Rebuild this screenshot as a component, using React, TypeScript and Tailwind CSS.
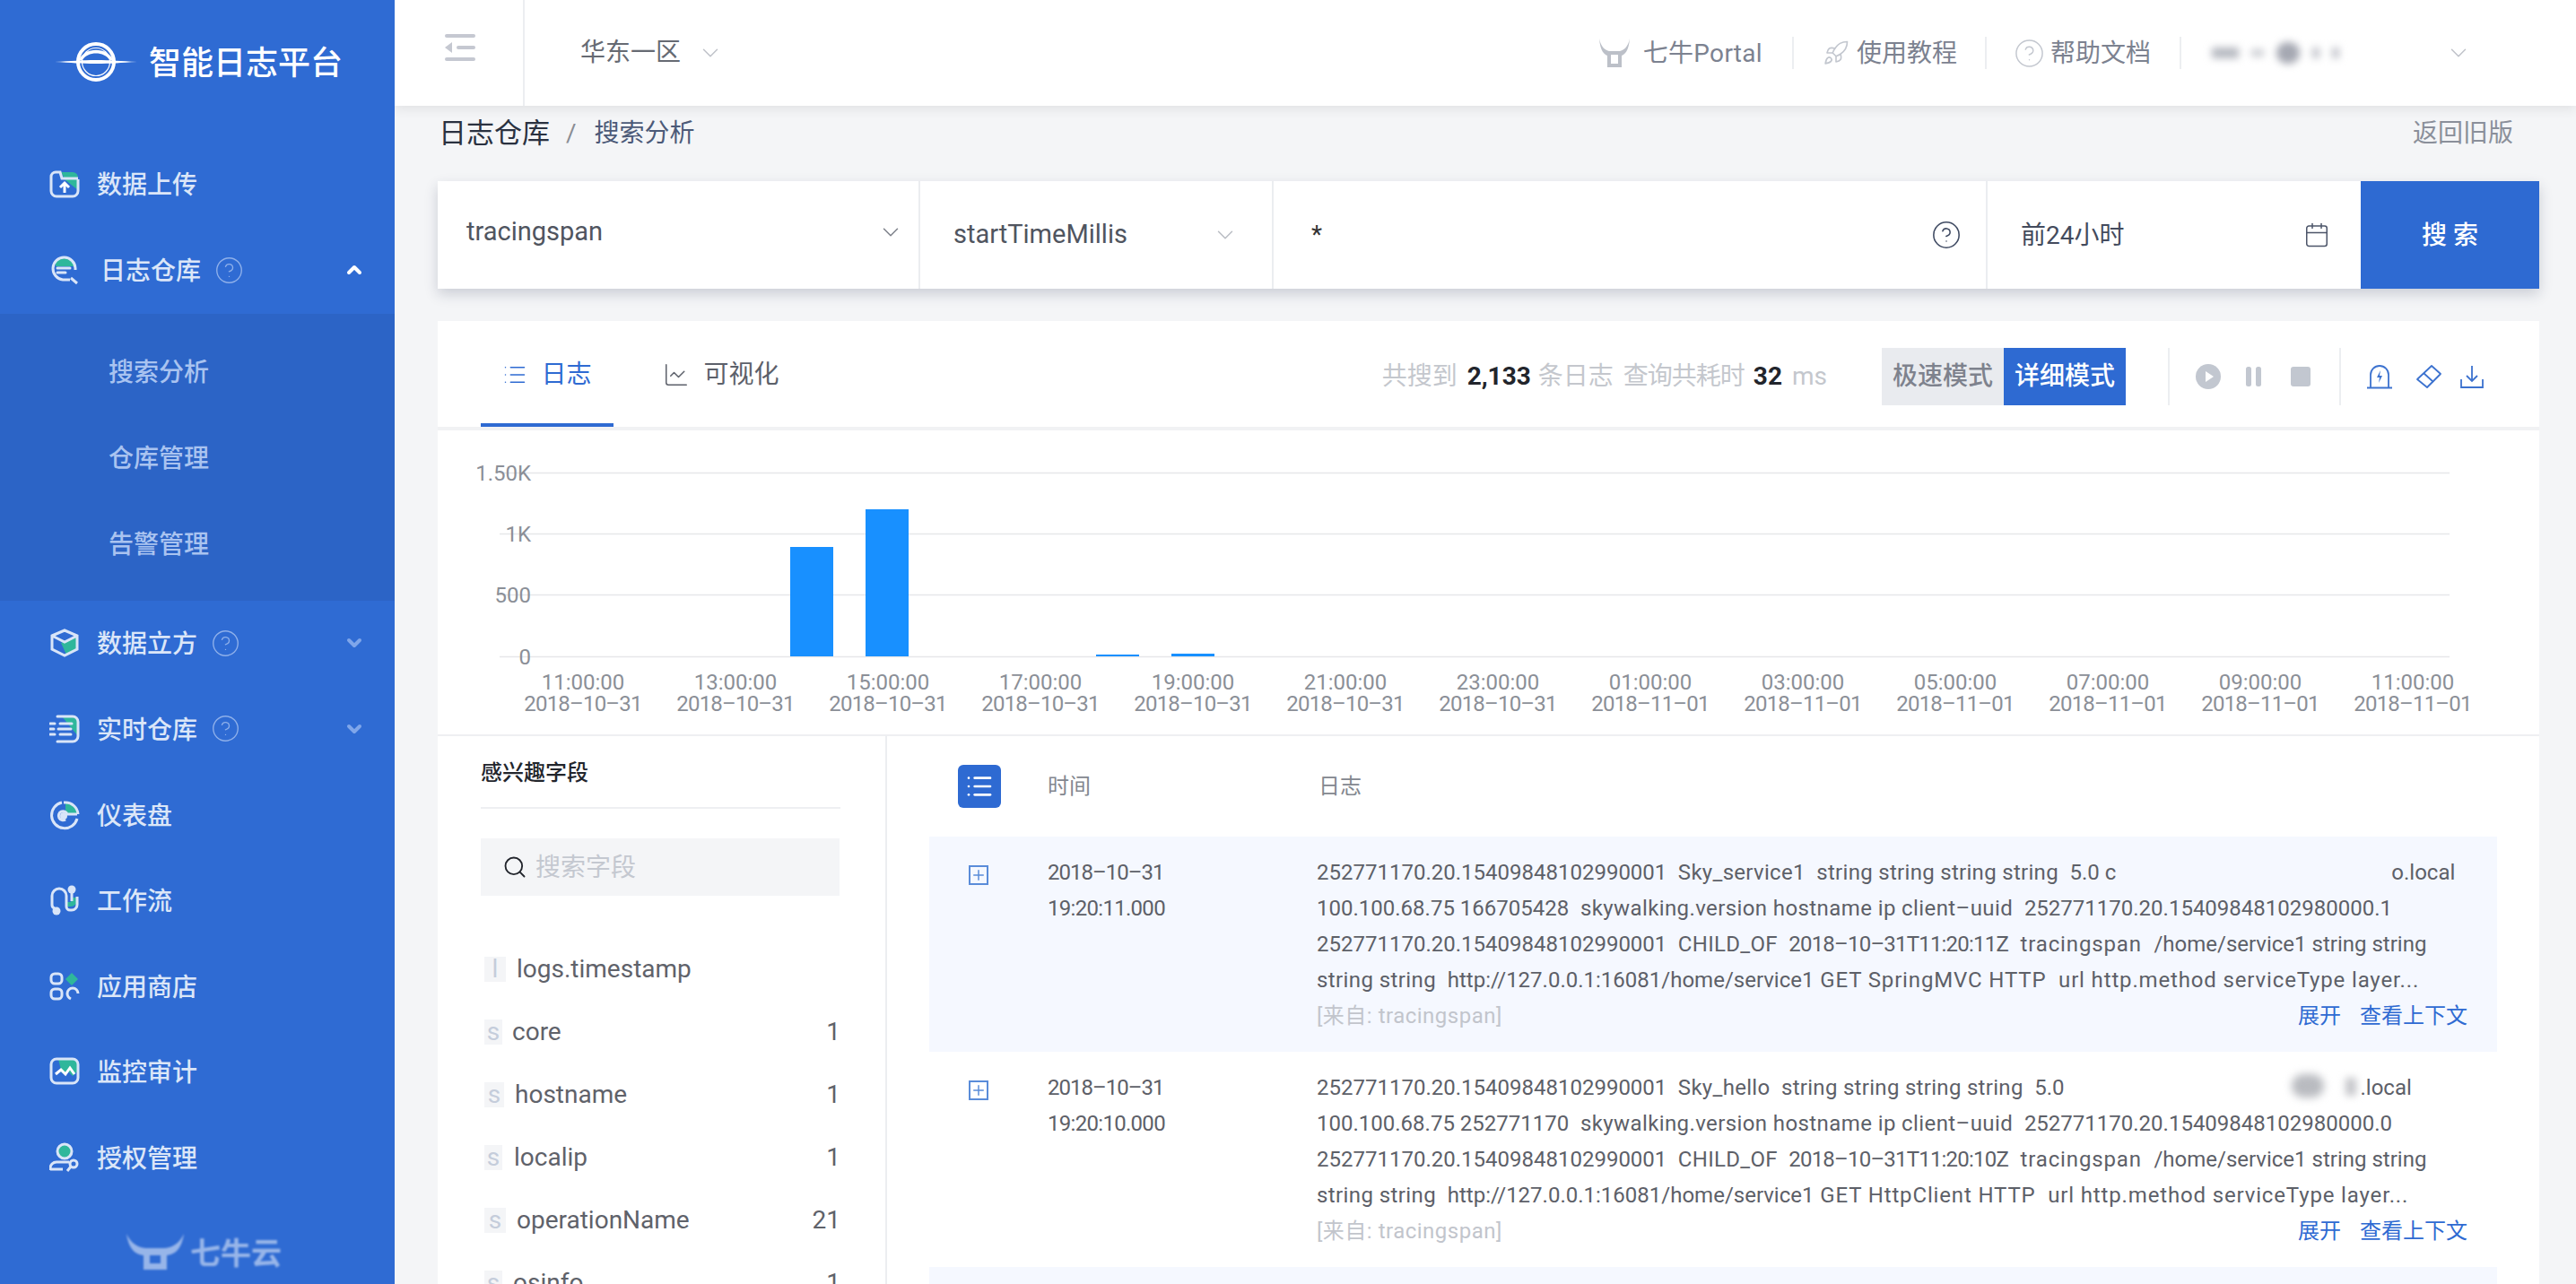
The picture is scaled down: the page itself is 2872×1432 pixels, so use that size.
import React from 'react';
import { ChevronDown, ChevronUp, CircleHelp, Rocket, Search, LineChart, List, Plus, Calendar } from 'lucide-react';

const S = '#d9e5f8';
const T = '#2fb79b';

const svg = 'w-[34px] h-[34px] shrink-0';
const IconUpload = () => (
  <svg viewBox="0 0 34 34" className={svg} fill="none" stroke={S} strokeWidth="3">
    <path d="M13 4h13a6 6 0 0 1 6 6v14L18 13z" fill={T} stroke="none" />
    <path d="M2 12V9a5 5 0 0 1 5-5h5l2 7h18M2 12v13a6 6 0 0 0 6 6h18a6 6 0 0 0 6-6V12" />
    <path d="M17 27v-10M12 21l5-5 5 5" stroke="#fff" />
  </svg>
);
const IconLog = () => (
  <svg viewBox="0 0 34 34" className={svg} fill="none" stroke={S} strokeWidth="3">
    <path d="M7 8a13 13 0 0 1 23 5H7z" fill={T} stroke="none" />
    <path d="M23 28H15A12.500 12.500 0 1 1 29 15v2M24 26l7 6" />
    <path d="M9 15h14M9 20h9" strokeLinecap="round" />
  </svg>
);
const IconCube = () => (
  <svg viewBox="0 0 34 34" className={svg} fill="none" stroke={S} strokeWidth="3">
    <path d="M13 17l19-7v14l-13 6z" fill={T} stroke="none" />
    <path d="M3 9l14-6 14 6v15l-14 7-14-7zM3 9l14 7 14-7M3 14v10" />
  </svg>
);
const IconStream = () => (
  <svg viewBox="0 0 34 34" className={svg} fill="none" stroke={S} strokeWidth="3" strokeLinecap="round">
    <path d="M14 3h12a6 6 0 0 1 6 6v16z" fill={T} stroke="none" />
    <path d="M9 3h17a6 6 0 0 1 6 6v16a6 6 0 0 1-6 6H9" />
    <path d="M12 11h13M1 11h5M10 17h14M1 17h4M12 23h12M1 23h5" />
  </svg>
);
const IconPie = () => (
  <svg viewBox="0 0 34 34" className={svg} fill="none" stroke={S} strokeWidth="3">
    <path d="M18 3a14 14 0 0 1 14 13H18z" fill={T} stroke="none" />
    <path d="M14 3A14.500 14.500 0 1 0 31 21M31 16H20a5 5 0 1 0-2 6" />
    <circle cx="16" cy="18" r="2.500" fill={S} />
    <path d="M16 3h2a14 14 0 0 1 14 13" />
  </svg>
);
const IconFlow = () => (
  <svg viewBox="0 0 34 34" className={svg} fill="none" stroke={S} strokeWidth="3">
    <path d="M18 24h6a7 7 0 0 0 7-7v-3h-7v5h-6z" fill={T} stroke="none" />
    <path d="M6 26a4 4 0 0 1-3-4V12a8 8 0 0 1 16 0v12a4 4 0 0 0 4 4h2a6 6 0 0 0 6-6V13" />
    <circle cx="8" cy="29" r="4.500" fill={S} stroke="none" />
    <circle cx="25" cy="5" r="4.500" fill={S} stroke="none" />
    <path d="M25 6v12" />
  </svg>
);
const IconApps = () => (
  <svg viewBox="0 0 34 34" className={svg} fill="none" stroke={S} strokeWidth="3">
    <rect x="2" y="3" width="12" height="11" rx="4" />
    <rect x="2" y="20" width="12" height="11" rx="4" />
    <path d="M25 2l7 7-7 7-7-7z" fill={T} stroke="none" />
    <path d="M32 25a6 6 0 0 0-12 0c0 3 2 5 4 6" />
  </svg>
);
const IconMonitor = () => (
  <svg viewBox="0 0 34 34" className={svg} fill="none" stroke={S} strokeWidth="3">
    <path d="M10 3h18a4 4 0 0 1 4 4v9l-6 6-6-6-6 3z" fill={T} stroke="none" />
    <rect x="2" y="3" width="30" height="27" rx="6" />
    <path d="M7 20l6-5 5 5 5-7 5 7" stroke="#fff" />
  </svg>
);
const IconAuth = () => (
  <svg viewBox="0 0 34 34" className={svg} fill="none" stroke={S} strokeWidth="3">
    <circle cx="17" cy="10" r="8" fill={T} stroke={S} />
    <path d="M1 31v-2a7 7 0 0 1 7-7h14M1 30h14" />
    <circle cx="27" cy="24" r="4" />
    <path d="M24 27l-4 5" />
  </svg>
);

const HelpDim = () => <CircleHelp className="w-[33px] h-[33px] text-[#8fb0ea] ml-[15px] shrink-0" strokeWidth={1} />;

function NavItem({ icon, label, help, arrow, gap = 'ml-[19px]', h = 'h-[95.6px]' }: { icon: React.ReactNode; label: string; help?: boolean; arrow?: 'up' | 'down'; gap?: string; h?: string }) {
  return (
    <div className={`flex items-center pl-[55px] pr-[33px] ${h}`}>
      {icon}
      <span className={`${gap} pt-[4px] text-[28px] text-[#dbe6f8] font-medium`}>{label}</span>
      {help && <HelpDim />}
      {arrow === 'up' && <ChevronUp className="ml-auto w-[24px] h-[24px] text-white" strokeWidth={4} />}
      {arrow === 'down' && <ChevronDown className="ml-auto w-[24px] h-[24px] text-[#7fa6ea]" strokeWidth={4} />}
    </div>
  );
}

function Sidebar() {
  return (
    <aside className="w-[440px] shrink-0 h-[1432px] bg-[#2f6bd3] flex flex-col overflow-hidden">
      <div className="h-[157px] shrink-0 flex items-start pt-[46px] pl-[60px]">
        <svg width="94" height="46" viewBox="0 0 94 46" className="shrink-0">
          <circle cx="47" cy="23" r="20" fill="none" stroke="#fff" strokeWidth="4" />
          <circle cx="47" cy="23" r="15.500" fill="none" stroke="#fff" strokeWidth="1.200" />
          <path d="M28 21C34 6 60 6 66 21z" fill="#fff" />
          <path d="M32 21C37 11 57 11 62 21z" fill="#2f6bd3" />
          <path d="M1 23C20 22 30 21 47 21S74 22 93 23C74 24 64 25 47 25S20 24 1 23z" fill="#fff" />
        </svg>
        <span className="ml-[12px] mt-[3px] text-[36px] leading-[44px] text-white font-medium whitespace-nowrap">智能日志平台</span>
      </div>
      <NavItem icon={<IconUpload />} label="数据上传" />
      <NavItem icon={<IconLog />} label="日志仓库" help arrow="up" gap="ml-[23px]" h="h-[97px]" />
      <div className="bg-[#2c64c6] h-[320px] shrink-0 py-[16px]">
        {['搜索分析', '仓库管理', '告警管理'].map((t) => (
          <div key={t} className="h-[96px] flex items-center pl-[121px] pt-[4px] text-[28px] text-[#a9c3f0] font-medium">{t}</div>
        ))}
      </div>
      <NavItem icon={<IconCube />} label="数据立方" help arrow="down" />
      <NavItem icon={<IconStream />} label="实时仓库" help arrow="down" />
      <NavItem icon={<IconPie />} label="仪表盘" />
      <NavItem icon={<IconFlow />} label="工作流" />
      <NavItem icon={<IconApps />} label="应用商店" />
      <NavItem icon={<IconMonitor />} label="监控审计" />
      <NavItem icon={<IconAuth />} label="授权管理" />
      <div className="mt-[36px] pl-[140px] flex items-start opacity-50 blur-[1px]">
        <svg width="66" height="44" viewBox="0 0 66 44" className="shrink-0">
          <path d="M1 1C6 12 14 16 22 17h22C52 16 60 12 65 1C62 20 54 24 46 25v16H20V25C12 24 4 20 1 1z" fill="#fff" />
          <path d="M27 25v9h12v-9z" fill="#2f6bd3" />
        </svg>
        <span className="ml-[6px] mt-[2px] text-[34px] leading-[42px] text-white font-bold whitespace-nowrap">七牛云</span>
      </div>
    </aside>
  );
}

const Sep = () => <span className="w-[2px] h-[36px] bg-[#eceef1] shrink-0" />;

function Header() {
  return (
    <header className="h-[118px] shrink-0 bg-white flex items-center shadow-[0_4px_12px_rgba(0,0,0,0.08)] relative z-10">
      <div className="w-[145px] h-full border-r-2 border-[#eceef1] flex items-start pt-[37px] pl-[55px] shrink-0">
        <svg width="36" height="32" viewBox="0 0 36 32" className="shrink-0">
          <rect x="1" y="1" width="34" height="4" rx="2" fill="#c5c8d1" />
          <rect x="14" y="14" width="21" height="4" rx="2" fill="#c5c8d1" />
          <rect x="1" y="27" width="34" height="4" rx="2" fill="#c5c8d1" />
          <path d="M1 16l8-6v12z" fill="#c5c8d1" />
        </svg>
      </div>
      <span className="ml-[62px] text-[28px] text-[#666a73]">华东一区</span>
      <ChevronDown className="ml-[18px] w-[30px] h-[30px] text-[#bfc2c9]" strokeWidth={1.200} />
      <div className="ml-auto flex items-center text-[28px] text-[#7c8290]">
        <svg width="36" height="34" viewBox="0 0 36 34" className="shrink-0">
          <path d="M1 1C3 11 8 14 12 15h12C28 14 33 11 35 1C34 15 29 19 26 20v13H10V20C7 19 2 15 1 1z" fill="#bcc0c8" />
          <path d="M14 19v10h8V19z" fill="#fff" />
        </svg>
        <span className="ml-[14px] pt-[2px] tracking-[0.3px]">七牛Portal</span>
        <span className="w-[33px]" />
        <Sep />
        <Rocket className="ml-[32px] w-[30px] h-[30px] text-[#c3c7cf]" strokeWidth={1.300} />
        <span className="ml-[8px] pt-[2px]">使用教程</span>
        <span className="w-[31px]" />
        <Sep />
        <CircleHelp className="ml-[30px] w-[35px] h-[35px] text-[#c3c7cf]" strokeWidth={1} />
        <span className="ml-[6px] pt-[2px]">帮助文档</span>
        <span className="w-[32px]" />
        <Sep />
        <div className="ml-[34px] w-[172px] h-[36px] flex items-center gap-[14px] shrink-0 blur-[4px]">
          <span className="w-[30px] h-[12px] bg-[#b5b8c0]" />
          <span className="w-[14px] h-[8px] bg-[#c8cad0]" />
          <span className="w-[26px] h-[24px] rounded-full bg-[#a5a8b2]" />
          <span className="w-[8px] h-[12px] bg-[#c0c2c9]" />
          <span className="w-[8px] h-[12px] bg-[#c0c2c9]" />
        </div>
        <ChevronDown className="ml-[88px] mr-[116px] w-[30px] h-[30px] text-[#bfc2c9]" strokeWidth={1.200} />
      </div>
    </header>
  );
}

function SearchBar() {
  return (
    <div className="h-[120px] shrink-0 bg-white flex shadow-[0_6px_14px_rgba(40,50,80,0.2)] text-[28px]">
      <div className="w-[538px] border-r-2 border-[#ebedf0] flex items-center pl-[32px] pr-[16px] pb-[6px] shrink-0">
        <span className="text-[#50555f] text-[29px]">tracingspan</span>
        <ChevronDown className="ml-auto w-[30px] h-[30px] text-[#7d818a]" strokeWidth={1.200} />
      </div>
      <div className="w-[394px] border-r-2 border-[#ebedf0] flex items-center pl-[37px] pr-[37px] shrink-0">
        <span className="text-[#50555f] text-[29px]">startTimeMillis</span>
        <ChevronDown className="ml-auto w-[30px] h-[30px] text-[#b9bcc3]" strokeWidth={1.200} />
      </div>
      <div className="w-[796px] border-r-2 border-[#ebedf0] flex items-center pl-[42px] pr-[27px] shrink-0">
        <span className="text-[#333]">*</span>
        <CircleHelp className="ml-auto w-[34px] h-[34px] text-[#3f4a62]" strokeWidth={1.100} />
      </div>
      <div className="flex-1 flex items-center pl-[37px] pr-[34px] min-w-0">
        <span className="pt-[2px] text-[#444b5d]">前24小时</span>
        <Calendar className="ml-auto w-[30px] h-[30px] text-[#4c5569]" strokeWidth={1.200} />
      </div>
      <div className="w-[199px] shrink-0 pt-[2px] bg-[#2e6ad2] flex items-center justify-center text-white font-medium whitespace-pre">搜 索</div>
    </div>
  );
}

const Tab = ({ active, icon, label, w }: { active?: boolean; icon: React.ReactNode; label: string; w: string }) => (
  <div className={`h-[118px] ${w} pt-[6px] flex items-center justify-center gap-[15px] text-[28px] border-b-4 ${active ? 'border-[#2e6ad2] text-[#2e6ad2]' : 'border-transparent text-[#5c606a]'}`}>
    {icon}
    <span>{label}</span>
  </div>
);

function Toolbar() {
  return (
    <div className="h-[122px] shrink-0 border-b-4 border-[#f1f2f4] flex items-start pl-[48px] pr-[62px]">
      <Tab active w="w-[148px]" label="日志" icon={<List className="w-[28px] h-[28px]" strokeWidth={1.300} />} />
      <div className="w-[55px]" />
      <Tab w="w-[130px]" label="可视化" icon={<LineChart className="w-[30px] h-[30px]" strokeWidth={1.200} />} />
      <div className="ml-auto flex items-center h-[118px] pt-[6px]">
        <div className="text-[28px] text-[#c4c7cd] flex items-center whitespace-nowrap">
          <span>共搜到</span>
          <b className="ml-[11px] text-[#22252c]">2,133</b>
          <span className="ml-[8px]">条日志</span>
          <span className="ml-[11px] tracking-[-1px]">查询共耗时</span>
          <b className="ml-[10px] text-[#22252c]">32</b>
          <span className="ml-[11px]">ms</span>
        </div>
        <div className="ml-[61px] flex text-[28px] font-medium h-[64px]">
          <span className="w-[136px] bg-[#e9ebef] text-[#7e828d] flex items-center justify-center">极速模式</span>
          <span className="w-[136px] bg-[#2e6ad2] text-white flex items-center justify-center">详细模式</span>
        </div>
        <span className="ml-[47px] w-[2px] h-[64px] bg-[#eceef1]" />
        <svg width="28" height="28" viewBox="0 0 28 28" className="ml-[29px] shrink-0">
          <circle cx="14" cy="14" r="14" fill="#c2c7d0" />
          <path d="M11 8l9 6-9 6z" fill="#fff" />
        </svg>
        <svg width="18" height="24" viewBox="0 0 18 24" className="ml-[28px] shrink-0">
          <rect x="0" y="1" width="6" height="22" rx="2.500" fill="#c2c7d0" />
          <rect x="11" y="1" width="6" height="22" rx="2.500" fill="#c2c7d0" />
        </svg>
        <svg width="22" height="22" viewBox="0 0 22 22" className="ml-[32px] shrink-0">
          <rect x="0" y="0" width="22" height="22" rx="3" fill="#c2c7d0" />
        </svg>
        <span className="ml-[32px] w-[2px] h-[64px] bg-[#eceef1]" />
        <svg width="30" height="30" viewBox="0 0 30 30" fill="none" stroke="#3c72cf" strokeWidth="1.800" className="ml-[28px] shrink-0">
          <path d="M5 27V13a10 10 0 0 1 20 0v14M1 27.500h28" />
          <path d="M16 8l-4 8h3l-1 6 4-8h-3z" fill="#3c72cf" stroke="none" />
        </svg>
        <svg width="30" height="28" viewBox="0 0 30 28" fill="none" stroke="#3c72cf" strokeWidth="1.800" className="ml-[25px] shrink-0">
          <path d="M18 2l10 9-15 15-11-9z" strokeLinejoin="round" />
          <path d="M9 10l11 10" />
        </svg>
        <svg width="26" height="26" viewBox="0 0 26 26" fill="none" stroke="#3c72cf" strokeWidth="1.800" className="ml-[20px] shrink-0">
          <path d="M13 1v17M7 12l6 6 6-6M1 16v9h24v-9" />
        </svg>
      </div>
    </div>
  );
}

function Chart() {
  const hours = ['11:00:00', '13:00:00', '15:00:00', '17:00:00', '19:00:00', '21:00:00', '23:00:00', '01:00:00', '03:00:00', '05:00:00', '07:00:00', '09:00:00', '11:00:00'];
  const gy = [47, 115, 183, 252];
  const yl = ['1.50K', '1K', '500', '0'];
  const bars = [[393, 130, 122], [477, 88, 164], [734, 250, 2], [818, 249, 3]];
  return (
    <div className="h-[341px] shrink-0 border-b-2 border-[#eeeff2]">
      <svg width="2343" height="339" viewBox="0 0 2343 339" className="block">
        {gy.map((y) => <line key={y} x1="69" x2="2243" y1={y + 0.5} y2={y + 0.5} stroke="#e6e7e9" strokeWidth="1.500" />)}
        {gy.map((y, i) => <text key={y} x="104" y={y + 9} textAnchor="end" fontSize="24" fill="#8b8f97">{yl[i]}</text>)}
        {bars.map(([x, y, h]) => <rect key={x} x={x} y={y} width="48" height={h} fill="#1890ff" />)}
        {hours.map((t, i) => (
          <g key={i} fontSize="24" fill="#8b8f97" textAnchor="middle">
            <text x={162 + i * 170} y="289">{t}</text>
            <text x={162 + i * 170} y="313" className="tracking-[-0.8px]">{i < 7 ? '2018–10–31' : '2018–11–01'}</text>
          </g>
        ))}
      </svg>
    </div>
  );
}

const fields = [
  { t: 'l', n: 'logs.timestamp', c: '', w: 'w-[24px] mr-[12px]' },
  { t: 's', n: 'core', c: '1', w: 'w-[20px] mr-[11px]' },
  { t: 's', n: 'hostname', c: '1', w: 'w-[22px] mr-[12px]' },
  { t: 's', n: 'localip', c: '1', w: 'w-[20px] mr-[13px]' },
  { t: 's', n: 'operationName', c: '21', w: 'w-[24px] mr-[12px]' },
  { t: 's', n: 'osinfo', c: '1', w: 'w-[20px] mr-[12px]' },
];

function Fields() {
  return (
    <div className="w-[501px] shrink-0 border-r-2 border-[#eceef1] pl-[48px] pr-[50px]">
      <div className="h-[81px] border-b-2 border-[#eeeff2] pt-[23px] text-[24px] leading-[36px] text-[#22252c] font-medium">感兴趣字段</div>
      <div className="mt-[33px] h-[64px] w-[400px] bg-[#f4f5f7] flex items-center pl-[24px]">
        <Search className="w-[28px] h-[28px] text-[#22252c]" strokeWidth={1.600} />
        <span className="ml-[9px] pt-[2px] text-[28px] text-[#c4c8d0]">搜索字段</span>
      </div>
      <div className="mt-[47px]">
        {fields.map((f) => (
          <div key={f.n} className="h-[70px] flex items-center pl-[4px]">
            <span className={`${f.w} h-[28px] bg-[#f4f5f7] flex items-center justify-center text-[28px] text-[#c5cddb] shrink-0`}>{f.t}</span>
            <span className="text-[28px] text-[#5f626a]">{f.n}</span>
            <span className="ml-auto text-[28px] text-[#5f626a]">{f.c}</span>
          </div>
        ))}
      </div>
    </div>
  );
}

const Id = ({ v }: { v: string }) => <>{v}</>;
const Sm = ({ v }: { v: string }) => <span className="tracking-[0.3px]">{v}</span>;
const Md = ({ v }: { v: string }) => <span className="tracking-[0.85px]">{v}</span>;
const Dt = ({ v }: { v: string }) => <span className="tracking-[-0.8px]">{v}</span>;

type LogRow = { time: string; bg: string; lines: React.ReactNode[] };

const rows: LogRow[] = [
  {
    time: '19:20:11.000',
    bg: 'bg-[#f5f8ff]',
    lines: [
      <><Id v="252771170.20.15409848102990001" /><Sm v="  Sky_service1  string string string string  " />5.0 c<span className="inline-block w-[307px]" />o.local</>,
      <><Id v="100.100.68.75 166705428" /><span className="tracking-[0.4px]">{'  skywalking.version hostname ip client–uuid  '}</span><Id v="252771170.20.15409848102980000.1" /></>,
      <><Id v="252771170.20.15409848102990001" /><Sm v="  CHILD_OF  " /><Dt v="2018–10–31T11:20:11Z" /><Md v="  tracingspan  " />/home/service1 string string</>,
      <><span className="tracking-[0.4px]">{'string string  '}</span>http://127.0.0.1:16081/home/service1<Md v=" GET SpringMVC HTTP  url http.method serviceType layer..." /></>,
    ],
  },
  {
    time: '19:20:10.000',
    bg: 'bg-white',
    lines: [
      <><Id v="252771170.20.15409848102990001" /><Sm v="  Sky_hello  string string string string  " />5.0<span className="inline-block w-[330px] relative h-[1px]"><span className="absolute left-[254px] -top-[22px] w-[36px] h-[26px] rounded-full bg-[#b9bbc0] blur-[5px]" /><span className="absolute left-[314px] -top-[18px] w-[12px] h-[20px] bg-[#c4c5c9] blur-[4px]" /></span>.local</>,
      <><Id v="100.100.68.75 252771170" /><span className="tracking-[0.4px]">{'  skywalking.version hostname ip client–uuid  '}</span><Id v="252771170.20.15409848102980000.0" /></>,
      <><Id v="252771170.20.15409848102990001" /><Sm v="  CHILD_OF  " /><Dt v="2018–10–31T11:20:10Z" /><Md v="  tracingspan  " />/home/service1 string string</>,
      <><span className="tracking-[0.4px]">{'string string  '}</span>http://127.0.0.1:16081/home/service1<Md v=" GET HttpClient HTTP  url http.method serviceType layer..." /></>,
    ],
  },
];

function Logs() {
  return (
    <div className="flex-1 min-w-0 px-[47px]">
      <div className="h-[112px] flex items-center text-[24px] text-[#83878f]">
        <div className="w-[132px] shrink-0 pl-[32px]">
          <span className="w-[48px] h-[48px] rounded-[6px] bg-[#2e6ad2] flex items-center justify-center">
            <List className="w-[32px] h-[32px] text-white" strokeWidth={2} />
          </span>
        </div>
        <span className="w-[302px] shrink-0">时间</span>
        <span>日志</span>
      </div>
      {rows.map((r) => (
        <div key={r.time} className={`${r.bg} h-[240px] flex pt-[20px] text-[24px] leading-[40px] text-[#5d6068]`}>
          <div className="w-[132px] shrink-0 pl-[44px] pt-[12px]">
            <span className="w-[22px] h-[22px] border-2 border-[#5a8cd9] flex items-center justify-center">
              <Plus className="w-[18px] h-[18px] text-[#5a8cd9]" strokeWidth={2} />
            </span>
          </div>
          <div className="w-[300px] shrink-0">
            <div className="tracking-[-1px]">2018–10–31</div>
            <div className="tracking-[-0.7px]">{r.time}</div>
          </div>
          <div className="flex-1 min-w-0 pr-[33px]">
            {r.lines.map((l, i) => <div key={i} className="whitespace-pre">{l}</div>)}
            <div className="flex items-center justify-between">
              <span className="text-[#c2c5cc] tracking-[0.5px]">[来自: tracingspan]</span>
              <span className="text-[#2e6ad2] whitespace-pre">展开<span className="ml-[21px]">查看上下文</span></span>
            </div>
          </div>
        </div>
      ))}
      <div className="h-[40px] bg-[#f5f8ff]" />
    </div>
  );
}

export default function App() {
  return (
    <div className="w-[2872px] h-[1432px] overflow-hidden flex bg-[#f4f5f7] [font-family:Roboto,Noto_Sans_CJK_SC,sans-serif]">
      <Sidebar />
      <main className="flex-1 min-w-0 h-[1432px] flex flex-col overflow-hidden">
        <Header />
        <div className="flex-1 min-h-0 pl-[48px] pr-[41px] flex flex-col">
          <div className="h-[84px] shrink-0 flex items-start pt-[8px] pl-[1px]">
            <span className="text-[31px] leading-[46px] text-[#2a3140]">日志仓库</span>
            <span className="ml-[18px] text-[28px] leading-[46px] text-[#8a8d94]">/</span>
            <span className="ml-[20px] text-[28px] leading-[46px] text-[#4c5a78]">搜索分析</span>
            <span className="ml-auto mr-[29px] text-[28px] leading-[46px] text-[#8a8f9a]">返回旧版</span>
          </div>
          <SearchBar />
          <section className="mt-[36px] bg-white flex-1 min-h-0 flex flex-col">
            <Toolbar />
            <Chart />
            <div className="flex-1 min-h-0 flex">
              <Fields />
              <Logs />
            </div>
          </section>
        </div>
      </main>
    </div>
  );
}
